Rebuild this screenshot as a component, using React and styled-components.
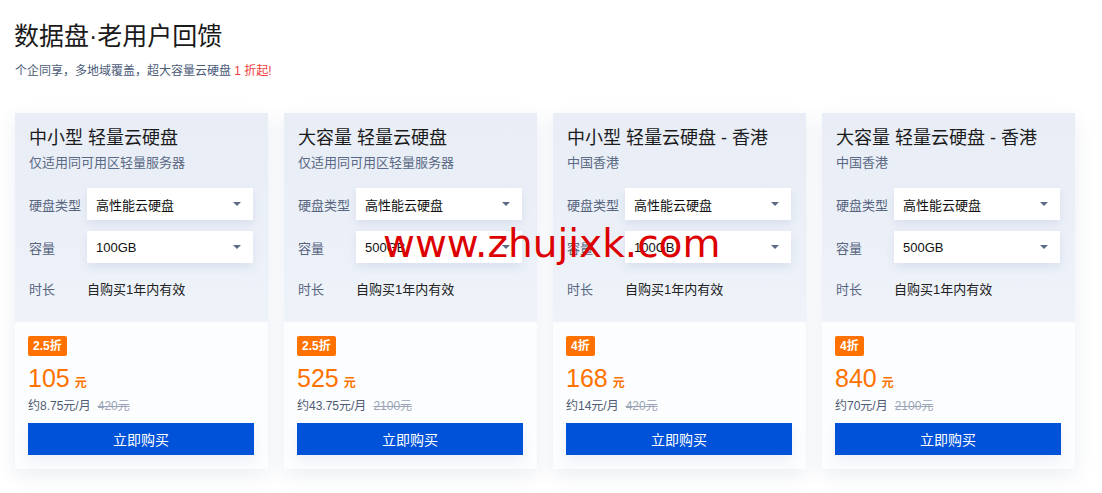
import React from 'react';
import styled, { createGlobalStyle } from 'styled-components';

const GlobalStyle = createGlobalStyle`
  body {
    margin: 0;
    background: #fff;
    font-family: "Liberation Sans", "Noto Sans CJK SC", sans-serif;
    color: #000;
  }
`;

const plans = [
  { title: '中小型 轻量云硬盘', sub: '仅适用同可用区轻量服务器', size: '100GB', tag: '2.5折', price: '105', month: '约8.75元/月', orig: '420元' },
  { title: '大容量 轻量云硬盘', sub: '仅适用同可用区轻量服务器', size: '500GB', tag: '2.5折', price: '525', month: '约43.75元/月', orig: '2100元' },
  { title: '中小型 轻量云硬盘 - 香港', sub: '中国香港', size: '100GB', tag: '4折', price: '168', month: '约14元/月', orig: '420元' },
  { title: '大容量 轻量云硬盘 - 香港', sub: '中国香港', size: '500GB', tag: '4折', price: '840', month: '约70元/月', orig: '2100元' },
];

const Arrow = () => (
  <svg width="8" height="4" viewBox="0 0 8 4">
    <path d="M0 0 H8 L4 4 Z" fill="#5c6a86" />
  </svg>
);

const Card = ({ p }) => (
  <CardBox>
    <Top>
      <Title>{p.title}</Title>
      <Sub>{p.sub}</Sub>
      <Rows>
        <Row>
          <Label>硬盘类型</Label>
          <Select>高性能云硬盘<Arrow /></Select>
        </Row>
        <Row>
          <Label>容量</Label>
          <Select>{p.size}<Arrow /></Select>
        </Row>
        <Row $h={28}>
          <Label>时长</Label>
          <Value>自购买1年内有效</Value>
        </Row>
      </Rows>
    </Top>
    <Bottom>
      <Tag>{p.tag}</Tag>
      <Price>{p.price}<Unit>元</Unit></Price>
      <Monthly>{p.month}<Orig>{p.orig}</Orig></Monthly>
      <Buy>立即购买</Buy>
    </Bottom>
  </CardBox>
);

export default function App() {
  return (
    <>
      <GlobalStyle />
      <Page>
        <Heading>数据盘·老用户回馈</Heading>
        <Desc>个企同享，多地域覆盖，超大容量云硬盘 <Red>1 折起!</Red></Desc>
        <Grid>
          {plans.map((p, i) => <Card key={i} p={p} />)}
        </Grid>
        <Watermark>www.zhujixk.com</Watermark>
      </Page>
    </>
  );
}

const Page = styled.div`
  position: relative;
  width: 1102px;
  height: 493px;
  padding: 19px 0 0 15px;
  box-sizing: border-box;
  overflow: hidden;
`;

const Heading = styled.h1`
  margin: 0 0 0 -1px;
  font-size: 25px;
  font-weight: 400;
  line-height: 34px;
  color: #1a1a1a;
`;

const Desc = styled.div`
  margin-top: 9px;
  font-size: 12px;
  line-height: 18px;
  color: #4b5b78;
`;

const Red = styled.span`
  color: #f33b3b;
`;

const Grid = styled.div`
  display: grid;
  grid-template-columns: repeat(4, 253px);
  gap: 16px;
  margin-top: 33px;
`;

const CardBox = styled.div`
  display: flex;
  flex-direction: column;
  height: 356px;
  box-shadow: 0 6px 18px rgba(60, 90, 150, 0.1);
  background: #fcfdfe;
`;

const Top = styled.div`
  height: 209px;
  box-sizing: border-box;
  padding: 12px 14px 0;
  background: linear-gradient(180deg, #e8edf6 0%, #eef2f9 100%);
`;

const Title = styled.div`
  font-size: 18px;
  line-height: 26px;
  color: #1b1b1b;
`;

const Sub = styled.div`
  margin-top: 3px;
  font-size: 13px;
  line-height: 18px;
  color: #5a6984;
`;

const Rows = styled.div`
  display: flex;
  flex-direction: column;
  gap: 11px;
  margin-top: 16px;
`;

const Row = styled.div`
  display: flex;
  align-items: center;
  height: ${(p) => p.$h || 32}px;
`;

const Label = styled.div`
  width: 58px;
  font-size: 13px;
  color: #56647e;
`;

const Select = styled.div`
  width: 166px;
  height: 32px;
  box-sizing: border-box;
  padding: 0 12px 0 9px;
  display: flex;
  align-items: center;
  justify-content: space-between;
  background: #fff;
  font-size: 13px;
  color: #111;
  box-shadow: 0 4px 10px rgba(60, 90, 150, 0.1);
`;

const Value = styled.div`
  font-size: 13px;
  color: #222;
`;

const Bottom = styled.div`
  flex: 1;
  padding: 14px 13px 0;
  display: flex;
  flex-direction: column;
  align-items: flex-start;
`;

const Tag = styled.div`
  height: 20px;
  padding: 0 5px;
  background: #ff7200;
  border-radius: 2px;
  color: #fff;
  font-size: 12px;
  font-weight: 700;
  line-height: 20px;
`;

const Price = styled.div`
  margin-top: 8px;
  height: 28px;
  display: flex;
  align-items: baseline;
  font-size: 25px;
  line-height: 28px;
  color: #ff7200;
`;

const Unit = styled.span`
  margin-left: 5px;
  font-size: 12px;
  font-weight: 700;
`;

const Monthly = styled.div`
  margin-top: 4px;
  height: 16px;
  display: flex;
  align-items: center;
  font-size: 12px;
  color: #4e5b73;
`;

const Orig = styled.span`
  margin-left: 7px;
  color: #9aa4b6;
  text-decoration: line-through;
`;

const Buy = styled.button`
  margin-top: 11px;
  width: 226px;
  height: 32px;
  border: none;
  background: #0052d9;
  color: #fff;
  font-family: inherit;
  font-size: 14px;
  cursor: pointer;
  box-shadow: 0 6px 12px rgba(60, 90, 150, 0.08);
`;

const Watermark = styled.div`
  position: absolute;
  left: 383px;
  top: 221px;
  font-family: "DejaVu Sans", sans-serif;
  font-size: 39px;
  color: #dd0000;
  pointer-events: none;
`;
